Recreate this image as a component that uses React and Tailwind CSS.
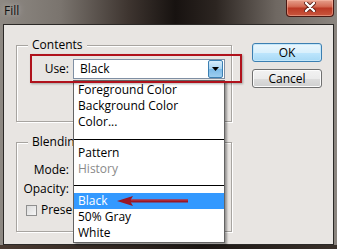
import React from 'react';

function GroupBox({ title, className, children }) {
  return (
    <div className={`border border-[#a7a4a0] shadow-[inset_1px_1px_0_#ffffff,1px_1px_0_#ffffff] ${className}`}>
      <div className="-mt-[9px] ml-[11px] w-fit bg-[#e8e5e2] px-[4px] leading-[16px]">{title}</div>
      {children}
    </div>
  );
}

function Combo({ value, width = 'w-[152px]' }) {
  return (
    <div className={`flex h-[20px] ${width} items-center justify-between border border-[#7f8fa3] bg-white pl-[6px] pr-[1px]`}>
      <span className="leading-[16px]">{value}</span>
      <div className="flex h-[18px] w-[15px] items-center justify-center rounded-[2px] border border-[#3c7fb1] bg-[linear-gradient(180deg,#d6ecfa_0%,#a9d5f3_50%,#7dbbe8_51%,#9ccdef_100%)]">
        <svg width="7" height="4" viewBox="0 0 7 4">
          <path d="M0 0 L7 0 L3.5 4 Z" fill="#000" />
        </svg>
      </div>
    </div>
  );
}

function Button({ label, primary }) {
  return (
    <button
      type="button"
      className={
        primary
          ? 'h-[19px] w-[70px] rounded-[3px] border border-[#3c7fb1] bg-[linear-gradient(180deg,#eaf6fd_0%,#d9f0fc_50%,#bee6fd_51%,#a7d9f5_100%)] leading-[16px] shadow-[inset_0_0_0_1px_#c4e7fa]'
          : 'h-[19px] w-[70px] rounded-[3px] border border-[#707070] bg-[linear-gradient(180deg,#f2f2f2_0%,#ebebeb_50%,#dddddd_51%,#cfcfcf_100%)] leading-[16px] shadow-[inset_0_0_0_1px_#fcfcfc]'
      }
    >
      {label}
    </button>
  );
}

function Item({ children, active, muted }) {
  return (
    <div
      className={`h-[16px] pl-[4px] leading-[16px] ${active ? 'bg-[#3399ff] text-white' : ''} ${muted ? 'text-[#8a8a8a]' : 'text-black'}`}
    >
      {children}
    </div>
  );
}

export default function App() {
  return (
    <div className="relative h-[249px] w-[337px] overflow-hidden bg-[linear-gradient(90deg,#8e8983_0%,#7a746e_18%,#3e3530_38%,#171210_52%,#2c2521_64%,#6f6862_82%,#8b857f_100%)] font-['Open_Sans',sans-serif] text-[12px] text-black">
      {/* title bar */}
      <div className="flex h-[24px] items-start justify-between">
        <span className="pl-[4px] pt-[3px] leading-[15px] text-[#111] [text-shadow:0_0_6px_rgba(255,255,255,0.6)]">Fill</span>
        <div className="mr-[3px] flex h-[17px] w-[48px] items-start justify-center rounded-b-[4px] border border-t-0 border-[#4a1812] bg-[linear-gradient(180deg,#e6a08c_0%,#d46c55_40%,#bb3a25_52%,#c9563e_100%)] pt-[2px] shadow-[inset_0_0_0_1px_rgba(255,200,180,0.45)]">
          <svg width="12" height="10" viewBox="0 0 12 10">
            <path d="M2 1 L10 9 M10 1 L2 9" stroke="#5a1e14" strokeWidth="4" strokeLinecap="round" />
            <path d="M2 1 L10 9 M10 1 L2 9" stroke="#ffffff" strokeWidth="2.4" strokeLinecap="round" />
          </svg>
        </div>
      </div>

      {/* client area */}
      <div className="ml-[3px] flex h-[221px] w-[331px] border border-[#2b2927] bg-[#e8e5e2]">
        <div className="pl-[12px]">
          <GroupBox title="Contents" className="mt-[20px] h-[77px] w-[216px]">
            <div className="mt-[6px] flex items-center">
              <span className="w-[52px] text-right leading-[16px]">Use:</span>
              <div className="ml-[4px]">
                <Combo value="Black" />
              </div>
            </div>
          </GroupBox>

          <GroupBox title="Blending" className="mt-[20px] h-[90px] w-[216px]">
            <div className="mt-[10px] flex h-[20px] items-center">
              <span className="w-[52px] text-right leading-[16px]">Mode:</span>
              <div className="ml-[4px]">
                <Combo value="" />
              </div>
            </div>
            <div className="flex h-[18px] items-center">
              <span className="w-[52px] text-right leading-[16px]">Opacity:</span>
            </div>
            <div className="mt-[3px] flex h-[18px] items-center">
              <div className="ml-[9px] h-[11px] w-[11px] border border-[#8f8f8f] bg-[linear-gradient(135deg,#dcdcdc_0%,#f6f6f6_100%)]" />
              <span className="ml-[4px] w-[33px] overflow-hidden whitespace-nowrap leading-[16px]">Preserve</span>
            </div>
          </GroupBox>
        </div>

        <div className="ml-[20px] mt-[18px] flex flex-col gap-[7px]">
          <Button label="OK" primary />
          <Button label="Cancel" />
        </div>
      </div>
      <div className="h-[4px] bg-[linear-gradient(90deg,#4a3b32_0%,#2e2520_40%,#1c1714_60%,#3a312b_100%)]" />

      {/* open dropdown list */}
      <div className="absolute left-[73px] top-[80px] h-[163px] w-[152px] border border-[#646464] bg-white py-[1px] shadow-[2px_2px_2px_rgba(0,0,0,0.35)]">
        <Item>Foreground Color</Item>
        <Item>Background Color</Item>
        <Item>Color...</Item>
        <div className="h-[15px] pt-[9px]">
          <div className="h-[1px] bg-black" />
        </div>
        <Item>Pattern</Item>
        <Item muted>History</Item>
        <div className="h-[16px] pt-[8px]">
          <div className="h-[1px] bg-black" />
        </div>
        <Item active>Black</Item>
        <Item>50% Gray</Item>
        <Item>White</Item>
      </div>

      {/* annotation: highlight box */}
      <div className="absolute left-[30px] top-[54px] h-[29px] w-[212px] border-2 border-[#b0121c] shadow-[1px_1px_2px_rgba(0,0,0,0.3)]" />

      {/* annotation: arrow */}
      <svg className="absolute left-[115px] top-[195px]" width="76" height="12" viewBox="0 0 76 12">
        <path d="M2 6 L18 1 L15 6 L18 11 Z" fill="#9a1626" />
        <rect x="14" y="4.5" width="59" height="3" fill="#9a1626" />
        <rect x="16" y="4.5" width="57" height="1" fill="#c23a48" />
      </svg>
    </div>
  );
}
